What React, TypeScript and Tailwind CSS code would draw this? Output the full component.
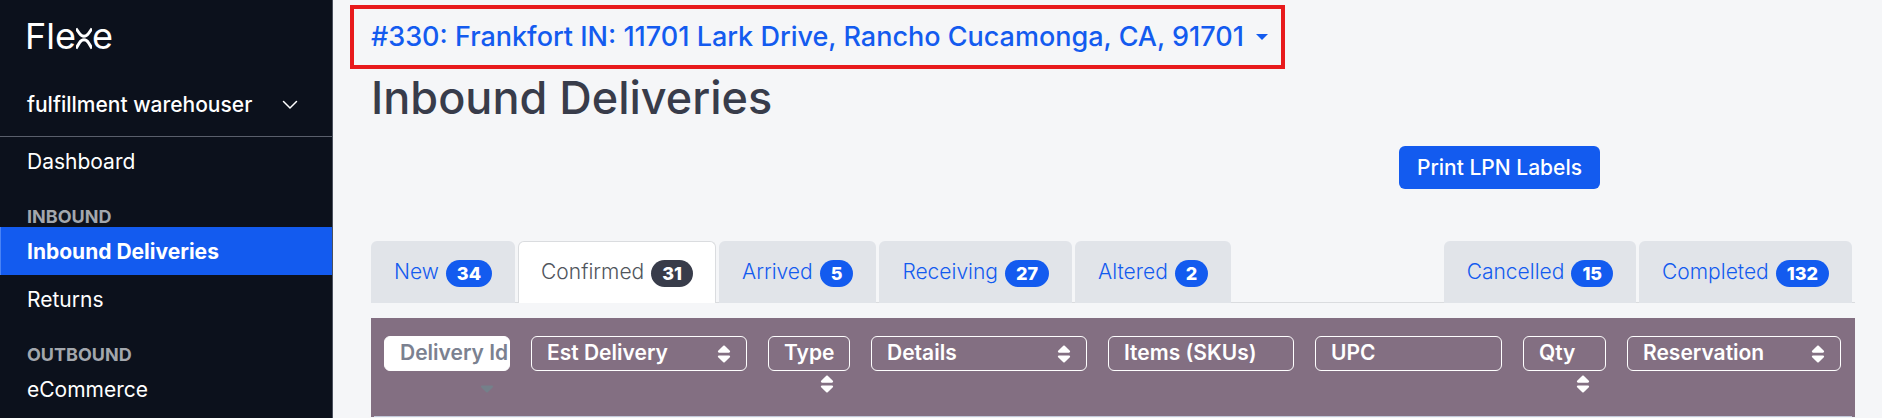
import { FaSort, FaSortDown } from "react-icons/fa";

interface Tab {
  label: string;
  count: number;
  active?: boolean;
}

interface Column {
  label: string;
  width: string;
  /** Where the sort arrows sit relative to the filter box. */
  sort?: "inside" | "below" | "descending";
}

const leftTabs: Tab[] = [
  { label: "New", count: 34 },
  { label: "Confirmed", count: 31, active: true },
  { label: "Arrived", count: 5 },
  { label: "Receiving", count: 27 },
  { label: "Altered", count: 2 },
];

const rightTabs: Tab[] = [
  { label: "Cancelled", count: 15 },
  { label: "Completed", count: 132 },
];

// Widths are proportions: the fixed table layout stretches them to fill the row.
const columns: Column[] = [
  { label: "Delivery Id", width: "w-[147px]", sort: "descending" },
  { label: "Est Delivery", width: "w-[237px]", sort: "inside" },
  { label: "Type", width: "w-[103px]", sort: "below" },
  { label: "Details", width: "w-[237px]", sort: "inside" },
  { label: "Items (SKUs)", width: "w-[207px]" },
  { label: "UPC", width: "w-[208px]" },
  { label: "Qty", width: "w-[104px]", sort: "below" },
  { label: "Reservation", width: "w-[235px]", sort: "inside" },
];

function Logo() {
  return (
    <a href="#" aria-label="Flexe" className="flex h-[56px] items-end pl-[25px] text-[36px] leading-[40px] text-white">
      <span>Fle</span>
      <svg width="16" height="40" viewBox="0 0 16 40" fill="none" stroke="currentColor" strokeWidth="3" aria-hidden={true}>
        <path d="M0 12.500l3.500 5c1.200 1.700 2.600 2.700 4.500 2.700s3.300-1 4.500-2.700l3.500-5" />
        <path d="M0 32.500l3.500-5.800c1.200-1.900 2.600-2.900 4.500-2.900s3.300 1 4.500 2.900l3.500 5.800" />
      </svg>
      <span>e</span>
    </a>
  );
}

function NavItem({ label, active }: { label: string; active?: boolean }) {
  return (
    <a
      href="#"
      aria-current={active ? "page" : undefined}
      className={
        active
          ? "flex h-12 items-center border-l border-[#4a83f5] bg-[#135bef] pt-[2px] pl-[26px] font-bold"
          : "flex h-12 items-center pt-[2px] pl-[27px]"
      }
    >
      {label}
    </a>
  );
}

function NavHeading({ label }: { label: string }) {
  return (
    <h2 className="flex h-[42px] items-end pl-[27px] text-[18px] leading-[20px] font-bold text-[#a3a7ad]">
      {label}
    </h2>
  );
}

function Sidebar() {
  return (
    <aside className="w-[333px] shrink-0 border-r border-[#4b515e] bg-[#0c111c] text-[21px] text-white">
      <Logo />
      <button
        type="button"
        className="flex h-[81px] w-full items-center justify-between border-b border-[#5a5f6b] pt-[18px] pr-[34px] pl-[27px] font-medium"
      >
        fulfillment warehouser
        <svg width="16" height="10" viewBox="0 0 16 10" fill="none" stroke="currentColor" strokeWidth="1.5" strokeLinecap="round" aria-hidden={true}>
          <path d="M1.500 1.500 8 8l6.500-6.500" />
        </svg>
      </button>
      <nav>
        <NavItem label="Dashboard" />
        <NavHeading label="INBOUND" />
        <NavItem label="Inbound Deliveries" active />
        <NavItem label="Returns" />
        <NavHeading label="OUTBOUND" />
        <NavItem label="eCommerce" />
      </nav>
    </aside>
  );
}

function TabLink({ label, count, active }: Tab) {
  return (
    <a
      href="#"
      aria-current={active ? "page" : undefined}
      className={
        active
          ? "-mb-px flex h-[62px] items-center gap-[7px] rounded-t-md border border-b-0 border-[#dadcdf] bg-white px-[22px] pb-px text-[#50555c]"
          : "-mb-px flex h-[62px] items-center gap-[7px] rounded-t-md bg-[#e1e4e9] px-[23px] text-[#135bef]"
      }
    >
      {label}
      <span
        className={
          active
            ? "mt-[3px] rounded-full bg-[#383c4a] px-[11px] text-[18px] leading-[27px] font-extrabold text-white"
            : "mt-[3px] rounded-full bg-[#135bef] px-[11px] text-[18px] leading-[27px] font-extrabold text-white"
        }
      >
        {count}
      </span>
    </a>
  );
}

function ColumnFilter({ label, width, sort }: Column) {
  const active = sort === "descending";
  return (
    <th scope="col" className={`${width} h-[95px] pt-[15px] pr-[11px] pl-[10px] align-top`}>
      <div className="relative">
        <input
          type="text"
          placeholder={label}
          aria-label={label}
          className={
            active
              ? "block h-[35px] w-full rounded-md border border-white bg-white pb-[2px] pl-[15px] font-semibold placeholder:text-[#7b8190]"
              : "block h-[35px] w-full rounded-md border border-white bg-transparent pb-[2px] pl-[15px] font-semibold text-white placeholder:text-white"
          }
        />
        {sort === "inside" && (
          <button type="button" aria-label={`Sort by ${label}`} className="absolute top-[7px] right-[16px] text-white">
            <FaSort size={22} className="w-[14px]" />
          </button>
        )}
        {sort === "below" && (
          <button type="button" aria-label={`Sort by ${label}`} className="mt-[2px] mr-[16px] ml-auto block text-white">
            <FaSort size={22} className="w-[14px]" />
          </button>
        )}
        {active && (
          <button type="button" aria-label={`Sort by ${label}`} className="mt-[2px] mr-[16px] ml-auto block text-[#74808a]">
            <FaSortDown size={22} className="w-[14px]" />
          </button>
        )}
      </div>
    </th>
  );
}

export default function App() {
  return (
    <div className="flex min-h-screen bg-[#f5f6f8] font-['Inter',sans-serif] text-[21px] leading-[30px]">
      <Sidebar />
      <main className="min-w-0 flex-1 pt-[5px] pr-[27px] pl-[17px]">
        <button
          type="button"
          aria-haspopup="menu"
          className="flex h-[64px] items-center gap-[12px] border-[4px] border-[#e81a1c] pr-[13px] pl-[17px] text-[27px] font-medium text-[#135bef]"
        >
          #330: Frankfort IN: 11701 Lark Drive, Rancho Cucamonga, CA, 91701
          <svg width="12" height="6" viewBox="0 0 12 6" fill="currentColor" aria-hidden={true}>
            <path d="M0 0h12L6 6z" />
          </svg>
        </button>

        <div className="pl-[21px]">
          <h1 className="text-[45px] leading-[58px] font-medium text-[#383c4a]">Inbound Deliveries</h1>

          <div className="mt-[19px] flex justify-end pr-[255px]">
            <button type="button" className="h-[43px] rounded-md bg-[#135bef] px-[18px] font-medium text-white">
              Print LPN Labels
            </button>
          </div>

          <nav aria-label="Delivery status" className="mt-[52px] flex justify-between border-b border-[#dadcdf] pr-[3px] font-light">
            <div className="flex gap-[3px]">
              {leftTabs.map((tab) => (
                <TabLink key={tab.label} {...tab} />
              ))}
            </div>
            <div className="flex gap-[3px]">
              {rightTabs.map((tab) => (
                <TabLink key={tab.label} {...tab} />
              ))}
            </div>
          </nav>

          <div className="mt-[15px] border-x-[3px] border-t-[3px] border-[#836f82]">
            <table className="w-full table-fixed border-collapse">
              <thead className="bg-[#836f82] text-left">
                <tr>
                  {columns.map((column) => (
                    <ColumnFilter key={column.label} {...column} />
                  ))}
                </tr>
              </thead>
              <tbody className="border-t border-[#c3c9da] bg-white">
                <tr>
                  <td colSpan={columns.length} className="h-px p-0" />
                </tr>
              </tbody>
            </table>
          </div>
        </div>
      </main>
    </div>
  );
}
